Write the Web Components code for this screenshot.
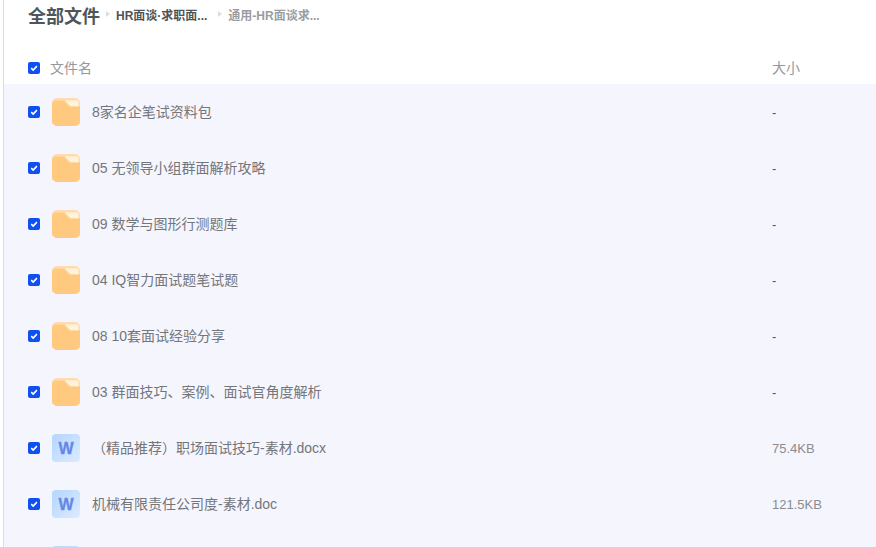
<!DOCTYPE html>
<html lang="zh">
<head>
<meta charset="utf-8">
<title>全部文件</title>
<style>
	html, body {
		margin: 0;
		height: 547px;
		overflow: hidden;
		background: #fff;
		font-family: "Liberation Sans", "Noto Sans CJK SC", sans-serif;
	}
</style>
</head>
<body>
<file-page>
	<crumb-bar slot="crumbs">
		<span slot="title">全部文件</span>
		<crumb-item>HR面谈·求职面...</crumb-item>
		<crumb-item muted>通用-HR面谈求...</crumb-item>
	</crumb-bar>
	<file-row type="folder" name="8家名企笔试资料包" size="-"></file-row>
	<file-row type="folder" name="05 无领导小组群面解析攻略" size="-"></file-row>
	<file-row type="folder" name="09 数学与图形行测题库" size="-"></file-row>
	<file-row type="folder" name="04 IQ智力面试题笔试题" size="-"></file-row>
	<file-row type="folder" name="08 10套面试经验分享" size="-"></file-row>
	<file-row type="folder" name="03 群面技巧、案例、面试官角度解析" size="-"></file-row>
	<file-row type="word" name="（精品推荐）职场面试技巧-素材.docx" size="75.4KB"></file-row>
	<file-row type="word" name="机械有限责任公司度-素材.doc" size="121.5KB"></file-row>
	<file-row type="cut" name="" size=""></file-row>
</file-page>

<script>
const CHECK = `
	<svg class="check" width="12" height="12" viewBox="0 0 12 12">
		<rect width="12" height="12" rx="2" fill="#0f50f0"/>
		<path d="M3.2 6.1 5.2 8.1 8.9 4.1" fill="none" stroke="#fff" stroke-width="1.6"/>
	</svg>`;

const PAPER = `
	<defs>
		<linearGradient id="paper" x1="0" y1="0" x2="1" y2="1">
			<stop offset="0" stop-color="#b3d6ff"/>
			<stop offset="1" stop-color="#dcebff"/>
		</linearGradient>
	</defs>
	<rect width="28" height="28" rx="4" fill="url(#paper)"/>`;

const ICONS = {
	folder: `
		<svg width="28" height="28" viewBox="0 0 28 28">
			<rect width="28" height="28" rx="5" fill="#ffdcae"/>
			<path d="M13 2.500H25a1.500 1.500 0 0 1 1.500 1.500V8.500H19Z" fill="#fff3e0"/>
			<path d="M0 6a4 4 0 0 1 3-3.500H10C12 2.500 13 3.500 14.500 5.500L17 8.500H28V23a5 5 0 0 1-5 5H5a5 5 0 0 1-5-5Z" fill="#ffc97f"/>
		</svg>`,
	word: `
		<svg width="28" height="28" viewBox="0 0 28 28">
			${PAPER}
			<text x="14" y="20" text-anchor="middle" font-family="Liberation Sans" font-weight="700" font-size="16" fill="#6488e8" stroke="#6488e8" stroke-width="0.3">W</text>
		</svg>`,
	// last row only shows the top edge of its icon
	cut: `<svg width="28" height="28" viewBox="0 0 28 28">${PAPER}</svg>`
};

class CrumbItem extends HTMLElement {
	constructor() {
		super();
		this.attachShadow({mode: 'open'});
		this.shadowRoot.innerHTML = `
			<style>
				:host {
					display: flex;
					align-items: center;
					gap: 6px;
					font-size: 12px;
					font-weight: 700;
					color: #4e5358;
				}

				:host([muted]) {
					color: #9a9c9f;
				}

				.arrow {
					width: 0;
					height: 0;
					border: 3px solid transparent;
					border-left: 4px solid #dcdde0;
					border-right-width: 0;
				}
			</style>
			<span class="arrow"></span>
			<slot></slot>
		`;
	}
}

class CrumbBar extends HTMLElement {
	constructor() {
		super();
		this.attachShadow({mode: 'open'});
		this.shadowRoot.innerHTML = `
			<style>
				:host {
					display: flex;
					align-items: center;
					gap: 6px;
					height: 30px;
					padding-left: 24px;
					padding-bottom: 2px;
				}

				slot[name="title"]::slotted(*) {
					font-size: 18px;
					font-weight: 700;
					color: #50555a;
				}

				.items {
					display: flex;
					gap: 11px;
					padding-bottom: 2px;
				}
			</style>
			<slot name="title"></slot>
			<div class="items"><slot></slot></div>
		`;
	}
}

class FileRow extends HTMLElement {
	constructor() {
		super();
		this.attachShadow({mode: 'open'});
		this.shadowRoot.innerHTML = `
			<style>
				:host {
					display: grid;
					grid-template-columns: 12px 28px 1fr 104px;
					align-items: center;
					column-gap: 12px;
					height: 56px;
					padding-left: 24px;
					background: #f5f5fe;
					font-size: 14px;
					color: #73767a;
				}

				.check, svg {
					display: block;
				}

				.name {
					white-space: nowrap;
					padding-bottom: 2px;
				}

				.size {
					color: #8a8c90;
					font-size: 13px;
				}

				.size.none {
					color: #55585c;
				}
			</style>
			<span class="box"></span>
			<span class="icon"></span>
			<span class="name"></span>
			<span class="size"></span>
		`;
	}

	connectedCallback() {
		const root = this.shadowRoot;
		const size = this.getAttribute('size');
		root.querySelector('.box').innerHTML = CHECK;
		root.querySelector('.icon').innerHTML = ICONS[this.getAttribute('type')];
		root.querySelector('.name').textContent = this.getAttribute('name');
		root.querySelector('.size').textContent = size;
		root.querySelector('.size').classList.toggle('none', size === '-');
	}
}

class FilePage extends HTMLElement {
	constructor() {
		super();
		this.attachShadow({mode: 'open'});
		this.shadowRoot.innerHTML = `
			<style>
				:host {
					display: block;
					height: 547px;
					overflow: hidden;
					box-sizing: border-box;
					border-left: 1px solid #dcdcea;
					margin-left: 3px;
				}

				.head {
					display: grid;
					grid-template-columns: 12px 1fr 104px;
					align-items: center;
					column-gap: 10px;
					height: 32px;
					margin-top: 20px;
					padding-left: 24px;
					font-size: 14px;
					color: #96989c;
				}

				.head span {
					padding-bottom: 2px;
				}

				svg {
					display: block;
				}
			</style>
			<slot name="crumbs"></slot>
			<div class="head">
				${CHECK}
				<span>文件名</span>
				<span>大小</span>
			</div>
			<slot></slot>
		`;
	}
}

customElements.define('crumb-item', CrumbItem);
customElements.define('crumb-bar', CrumbBar);
customElements.define('file-row', FileRow);
customElements.define('file-page', FilePage);
</script>
</body>
</html>
